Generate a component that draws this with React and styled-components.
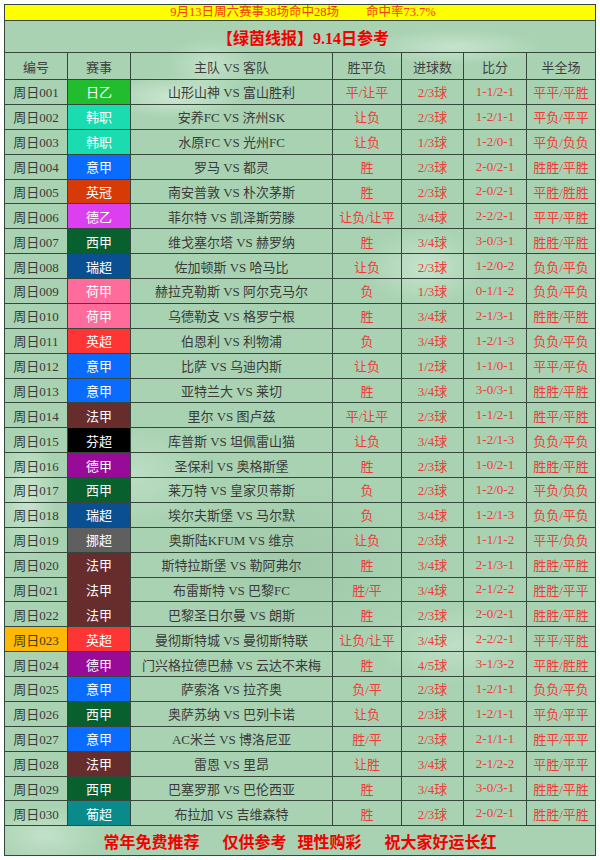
import React from 'react';
import styled, { createGlobalStyle } from 'styled-components';

const GlobalStyle = createGlobalStyle`
  html, body {
    margin: 0;
    padding: 0;
    background: #ffffff;
  }
  body {
    font-family: "Liberation Serif", "Noto Sans CJK SC", serif;
  }
`;

const LEAGUE_COLORS = {
  '日乙': '#21bd2e',
  '韩职': '#1adcb0',
  '意甲': '#0a6cff',
  '英冠': '#d63a06',
  '德乙': '#dc3ff0',
  '西甲': '#08602e',
  '瑞超': '#0b4f93',
  '荷甲': '#ff6b9a',
  '英超': '#ff3535',
  '法甲': '#672c2c',
  '芬超': '#000000',
  '德甲': '#980b98',
  '挪超': '#5f5f5f',
  '葡超': '#0a8a8a',
};

const rows = [
  ['001', '日乙', '山形山神', '富山胜利', '平/让平', '2/3球', '1-1/2-1', '平平/平胜'],
  ['002', '韩职', '安养FC', '济州SK', '让负', '2/3球', '1-2/1-1', '平负/平平'],
  ['003', '韩职', '水原FC', '光州FC', '让负', '1/3球', '1-2/0-1', '平负/负负'],
  ['004', '意甲', '罗马', '都灵', '胜', '2/3球', '2-0/2-1', '胜胜/平胜'],
  ['005', '英冠', '南安普敦', '朴次茅斯', '胜', '2/3球', '2-0/2-1', '平胜/胜胜'],
  ['006', '德乙', '菲尔特', '凯泽斯劳滕', '让负/让平', '3/4球', '2-2/2-1', '平平/平胜'],
  ['007', '西甲', '维戈塞尔塔', '赫罗纳', '胜', '3/4球', '3-0/3-1', '胜胜/平胜'],
  ['008', '瑞超', '佐加顿斯', '哈马比', '让负', '2/3球', '1-2/0-2', '负负/平负'],
  ['009', '荷甲', '赫拉克勒斯', '阿尔克马尔', '负', '1/3球', '0-1/1-2', '负负/平负'],
  ['010', '荷甲', '乌德勒支', '格罗宁根', '胜', '3/4球', '2-1/3-1', '胜胜/平胜'],
  ['011', '英超', '伯恩利', '利物浦', '负', '3/4球', '1-2/1-3', '负负/平负'],
  ['012', '意甲', '比萨', '乌迪内斯', '让负', '1/2球', '1-1/0-1', '平平/平负'],
  ['013', '意甲', '亚特兰大', '莱切', '胜', '3/4球', '3-0/3-1', '胜胜/平胜'],
  ['014', '法甲', '里尔', '图卢兹', '平/让平', '2/3球', '1-1/2-1', '胜平/平胜'],
  ['015', '芬超', '库普斯', '坦佩雷山猫', '让负', '3/4球', '1-2/1-3', '负负/平负'],
  ['016', '德甲', '圣保利', '奥格斯堡', '胜', '2/3球', '1-0/2-1', '胜胜/平胜'],
  ['017', '西甲', '莱万特', '皇家贝蒂斯', '负', '2/3球', '1-2/0-2', '平负/负负'],
  ['018', '瑞超', '埃尔夫斯堡', '马尔默', '负', '3/4球', '1-2/1-3', '负负/平负'],
  ['019', '挪超', '奥斯陆KFUM', '维京', '让负', '2/3球', '1-1/1-2', '平平/负负'],
  ['020', '法甲', '斯特拉斯堡', '勒阿弗尔', '胜', '3/4球', '2-1/3-1', '胜胜/平胜'],
  ['021', '法甲', '布雷斯特', '巴黎FC', '胜/平', '3/4球', '2-1/2-2', '胜胜/平平'],
  ['022', '法甲', '巴黎圣日尔曼', '朗斯', '胜', '2/3球', '2-0/2-1', '胜胜/平胜'],
  ['023', '英超', '曼彻斯特城', '曼彻斯特联', '让负/让平', '3/4球', '2-2/2-1', '平平/平胜'],
  ['024', '德甲', '门兴格拉德巴赫', '云达不来梅', '胜', '4/5球', '3-1/3-2', '平胜/胜胜'],
  ['025', '意甲', '萨索洛', '拉齐奥', '负/平', '2/3球', '1-2/1-1', '负负/平负'],
  ['026', '西甲', '奥萨苏纳', '巴列卡诺', '让负', '2/3球', '1-2/1-1', '平负/平平'],
  ['027', '意甲', 'AC米兰', '博洛尼亚', '胜/平', '2/3球', '2-1/1-1', '胜平/平平'],
  ['028', '法甲', '雷恩', '里昂', '让胜', '3/4球', '2-1/2-2', '平胜/平平'],
  ['029', '西甲', '巴塞罗那', '巴伦西亚', '胜', '3/4球', '3-0/3-1', '胜胜/平胜'],
  ['030', '葡超', '布拉加', '吉维森特', '胜', '2/3球', '2-0/2-1', '胜胜/平胜'],
];

const HIGHLIGHT_ID = '023';

const Page = styled.div`
  padding: 4px 0 0 4px;
`;

const Board = styled.div`
  width: 592px;
  box-sizing: border-box;
  border: 1px solid #34473a;
  background-color: #a8d2b1;
  background-image:
    radial-gradient(ellipse 70px 22px at 170px 92px, rgba(235, 248, 238, 0.55), transparent),
    radial-gradient(ellipse 90px 18px at 450px 42px, rgba(235, 248, 238, 0.45), transparent),
    radial-gradient(ellipse 45px 28px at 205px 60px, rgba(235, 248, 238, 0.4), transparent),
    radial-gradient(ellipse 30px 70px at 22px 490px, rgba(235, 248, 238, 0.5), transparent),
    radial-gradient(ellipse 60px 40px at 420px 262px, rgba(235, 248, 238, 0.45), transparent),
    radial-gradient(ellipse 80px 40px at 450px 640px, rgba(235, 248, 238, 0.35), transparent),
    radial-gradient(ellipse 70px 50px at 130px 470px, rgba(235, 248, 238, 0.3), transparent),
    radial-gradient(ellipse 60px 30px at 40px 830px, rgba(235, 248, 238, 0.4), transparent),
    radial-gradient(ellipse 120px 80px at 300px 560px, rgba(120, 160, 130, 0.18), transparent);
`;

const Banner = styled.div`
  height: 16px;
  box-sizing: border-box;
  border-bottom: 1px solid #34473a;
  background: #ffff00;
  color: #f23c00;
  font-size: 12.5px;
  line-height: 15px;
  display: flex;
  justify-content: center;
  gap: 27px;
  padding-left: 6px;
`;

const Title = styled.div`
  height: 32px;
  box-sizing: border-box;
  border-bottom: 1px solid #34473a;
  display: flex;
  align-items: center;
  justify-content: center;
  color: #f20000;
  font-size: 16px;
  font-weight: bold;
  padding-left: 6px;
`;

const Grid = styled.div`
  display: grid;
  grid-template-columns: 63px 63px 202px 69px 62px 63px 68px;
  grid-template-rows: 27px;
  grid-auto-rows: 24.88px;
`;

const Cell = styled.div`
  box-sizing: border-box;
  border-bottom: 1px solid #34473a;
  border-right: ${(p) => (p.$last ? 'none' : '1px solid #34473a')};
  display: flex;
  align-items: center;
  justify-content: center;
  font-size: 13px;
  white-space: pre;
  color: ${(p) => p.$color || '#3a3a3a'};
  background: ${(p) => p.$bg || 'transparent'};
`;

const HeadCell = styled(Cell)`
  color: #3f3f3f;
`;

const LeagueCell = styled(Cell)`
  color: #ffffff;
`;

const ResultCell = styled(Cell)`
  color: #f03a3a;
`;

const Footer = styled.div`
  height: 28.6px;
  display: flex;
  align-items: center;
  justify-content: center;
  color: #f20000;
  font-size: 16px;
  font-weight: bold;
`;

const Phrase = styled.span`
  margin-left: ${(p) => p.$gap || 0}px;
`;

const headers = ['编号', '赛事', '主队 VS 客队', '胜平负', '进球数', '比分', '半全场'];

export default function App() {
  return (
    <Page>
      <GlobalStyle />
      <Board>
        <Banner>
          <span>9月13日周六赛事38场命中28场</span>
          <span>命中率73.7%</span>
        </Banner>
        <Title>【绿茵线报】9.14日参考</Title>
        <Grid>
          {headers.map((h, i) => (
            <HeadCell key={h} $last={i === headers.length - 1}>{h}</HeadCell>
          ))}
          {rows.map(([id, league, home, away, wdl, goals, score, half]) => (
            <React.Fragment key={id}>
              <Cell $bg={id === HIGHLIGHT_ID ? '#ffb905' : undefined} $color={id === HIGHLIGHT_ID ? '#4a3a10' : undefined}>
                {'周日' + id}
              </Cell>
              <LeagueCell $bg={LEAGUE_COLORS[league]}>{league}</LeagueCell>
              <Cell>{`${home} VS ${away}`}</Cell>
              <ResultCell>{wdl}</ResultCell>
              <ResultCell>{goals}</ResultCell>
              <ResultCell>{score}</ResultCell>
              <ResultCell $last>{half}</ResultCell>
            </React.Fragment>
          ))}
        </Grid>
        <Footer>
          <Phrase>常年免费推荐</Phrase>
          <Phrase $gap={23}>仅供参考</Phrase>
          <Phrase $gap={11}>理性购彩</Phrase>
          <Phrase $gap={23}>祝大家好运长红</Phrase>
        </Footer>
      </Board>
    </Page>
  );
}
